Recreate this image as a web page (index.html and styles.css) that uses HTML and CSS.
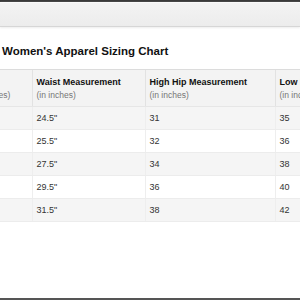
FILE: index.html
```html
<!DOCTYPE html>
<html>
<head>
<meta charset="utf-8">
<link rel="stylesheet" href="styles.css">
</head>
<body>
<div class="page">
  <div class="topbar"></div>
  <div class="toolbar"></div>
  <h1 class="title">Women's Apparel Sizing Chart</h1>
  <div class="table-wrap">
    <table class="chart">
      <colgroup>
        <col class="c1"><col class="c2"><col class="c3"><col class="c4">
      </colgroup>
      <thead>
        <tr>
          <th><span class="head">Bust</span><span class="unit">(in inches)</span></th>
          <th><span class="head">Waist Measurement</span><span class="unit">(in inches)</span></th>
          <th><span class="head">High Hip Measurement</span><span class="unit">(in inches)</span></th>
          <th><span class="head">Low Hip Measurement</span><span class="unit">(in inches)</span></th>
        </tr>
      </thead>
      <tbody>
        <tr><td>32"</td><td>24.5"</td><td>31</td><td>35</td></tr>
        <tr><td>33"</td><td>25.5"</td><td>32</td><td>36</td></tr>
        <tr><td>35"</td><td>27.5"</td><td>34</td><td>38</td></tr>
        <tr><td>37"</td><td>29.5"</td><td>36</td><td>40</td></tr>
        <tr><td>39"</td><td>31.5"</td><td>38</td><td>42</td></tr>
      </tbody>
    </table>
  </div>
  <div class="spacer"></div>
  <div class="bottombar"></div>
</div>
</body>
</html>
```
FILE: styles.css
```css
html, body {
  margin: 0;
  padding: 0;
  background: #ffffff;
}
.page {
  width: 300px;
  height: 300px;
  display: flex;
  flex-direction: column;
  overflow: hidden;
  font-family: "Liberation Sans", Arial, sans-serif;
  color: #111;
}
.topbar {
  height: 2px;
  background: #3a3a3a;
  flex: none;
}
.toolbar {
  height: 23px;
  flex: none;
  border-top: 1px solid #fafafa;
  background: linear-gradient(#f3f3f3, #ececec);
  border-bottom: 1px solid #d6d6d6;
  box-shadow: 0 1px 2px #ececec;
}
.title {
  margin: 17px 0 0 2px;
  font-size: 11.5px;
  line-height: 15px;
  font-weight: bold;
  color: #111;
  flex: none;
}
.table-wrap {
  margin-top: 10px;
  overflow: hidden;
  flex: none;
}
.chart {
  border-collapse: collapse;
  margin-left: -33px;
  table-layout: fixed;
  width: 438px;
}
.c1 { width: 65px; }
.c2 { width: 113px; }
.c3 { width: 130px; }
.c4 { width: 130px; }
.chart th {
  text-align: left;
  vertical-align: top;
  background: #f3f3f3;
  border-top: 1px solid #dcdcdc;
  border-left: 1px solid #e2e2e2;
  border-bottom: 1px solid #e6e6e6;
  padding: 6px 5px 0 4px;
  height: 30px;
}
.chart th:first-child { border-left: none; }
.head {
  display: block;
  font-size: 9px;
  line-height: 12px;
  font-weight: bold;
  color: #111;
  white-space: nowrap;
}
.unit {
  display: block;
  margin-top: 2px;
  font-size: 8.5px;
  line-height: 10px;
  font-weight: normal;
  color: #767676;
  white-space: nowrap;
}
.chart td {
  height: 22px;
  padding: 0 4px;
  font-size: 9px;
  color: #333;
  border-left: 1px solid #eeeeee;
  border-bottom: 1px solid #ececec;
}
.chart td:first-child { border-left: none; }
.chart tbody tr:nth-child(odd) td { background: #f5f5f5; }
.spacer { flex: 1; }
.bottombar {
  height: 2px;
  background: #555;
  flex: none;
}
```
